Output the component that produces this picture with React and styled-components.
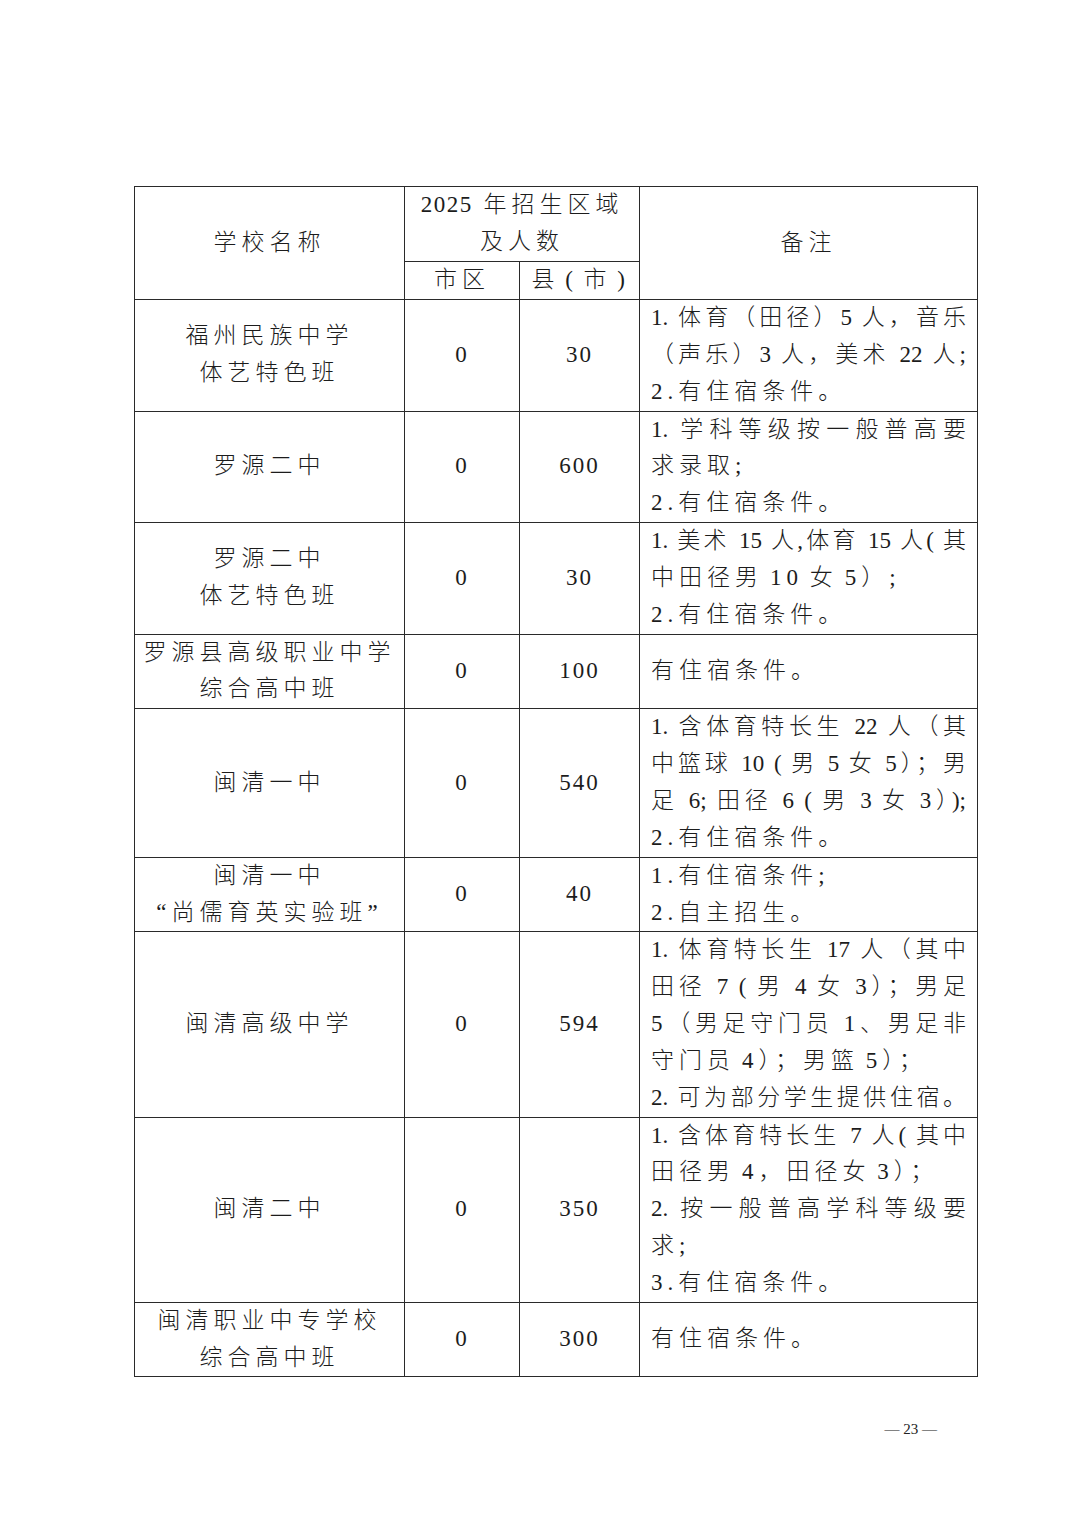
import React from "react";
import styled, { createGlobalStyle } from "styled-components";

const Global = createGlobalStyle`
  html, body { margin: 0; padding: 0; background: #fff; }
  body { font-family: "Liberation Serif", "Noto Sans CJK SC", serif; color: #1c1c1c; }
`;

const Page = styled.div`
  width: 1080px;
  height: 1528px;
  box-sizing: border-box;
  padding: 186px 0 0 134px;
  display: flex;
  flex-direction: column;
`;

const Table = styled.table`
  border-collapse: collapse;
  table-layout: fixed;
  width: 843px;
  font-size: 23px;
  line-height: 36.85px;
  font-weight: 300;
  letter-spacing: 5px;
`;

const Cell = styled.td`
  border: 1px solid #2a2a2a;
  padding: 0 ${(p) => (p.$pad ? "11px" : "0")};
  vertical-align: middle;
  text-align: ${(p) => (p.$left ? "left" : "center")};
  letter-spacing: ${(p) => (p.$num ? "2px" : p.$tight ? "2.5px" : "5px")};
  height: ${(p) => (p.$h ? p.$h + "px" : "auto")};
`;

const Num = styled.span`
  letter-spacing: 1.5px;
`;

const Line = styled.div`
  white-space: nowrap;
  text-align: ${(p) => (p.$full ? "justify" : "left")};
  text-align-last: ${(p) => (p.$full ? "justify" : "left")};
  text-justify: inter-character;
  letter-spacing: ${(p) => (p.$full ? "0px" : "5px")};
`;

const Footer = styled.div`
  width: 803px;
  margin-top: 44px;
  text-align: right;
  font-family: "Liberation Serif", serif;
  font-size: 15px;
  color: #222;
`;

const rows = [
  {
    name: ["福州民族中学", "体艺特色班"],
    a: "0",
    b: "30",
    notes: [
      ["1. 体育（田径）5 人，音乐", true],
      ["（声乐）3 人，美术 22 人;", true],
      ["2.有住宿条件。"],
    ],
  },
  {
    name: ["罗源二中"],
    a: "0",
    b: "600",
    notes: [["1. 学科等级按一般普高要", true], ["求录取;"], ["2.有住宿条件。"]],
  },
  {
    name: ["罗源二中", "体艺特色班"],
    a: "0",
    b: "30",
    notes: [
      ["1. 美术 15 人,体育 15 人( 其", true],
      ["中田径男\u200a10\u200a女\u200a5）;"],
      ["2.有住宿条件。"],
    ],
  },
  {
    name: ["罗源县高级职业中学", "综合高中班"],
    a: "0",
    b: "100",
    notes: [["有住宿条件。"]],
  },
  {
    name: ["闽清一中"],
    a: "0",
    b: "540",
    notes: [
      ["1. 含体育特长生 22 人（其", true],
      ["中篮球 10 ( 男 5 女 5）；男", true],
      ["足 6; 田径 6 ( 男 3 女 3）);", true],
      ["2.有住宿条件。"],
    ],
  },
  {
    name: ["闽清一中", "“尚儒育英实验班”"],
    a: "0",
    b: "40",
    notes: [["1.有住宿条件;"], ["2.自主招生。"]],
  },
  {
    name: ["闽清高级中学"],
    a: "0",
    b: "594",
    notes: [
      ["1. 体育特长生 17 人（其中", true],
      ["田径 7 ( 男 4 女 3）；男足", true],
      ["5（男足守门员 1、男足非", true],
      ["守门员\u200a4）；男篮\u200a5）；"],
      ["2. 可为部分学生提供住宿。", true],
    ],
  },
  {
    name: ["闽清二中"],
    a: "0",
    b: "350",
    notes: [
      ["1. 含体育特长生 7 人( 其中", true],
      ["田径男\u200a4，田径女\u200a3）；"],
      ["2. 按一般普高学科等级要", true],
      ["求;"],
      ["3.有住宿条件。"],
    ],
  },
  {
    name: ["闽清职业中专学校", "综合高中班"],
    a: "0",
    b: "300",
    notes: [["有住宿条件。"]],
  },
];

export default function App() {
  return (
    <>
      <Global />
      <Page>
        <Table>
          <colgroup>
            <col style={{ width: 270 }} />
            <col style={{ width: 115 }} />
            <col style={{ width: 120 }} />
            <col style={{ width: 338 }} />
          </colgroup>
          <tbody>
            <tr>
              <Cell rowSpan={2}>学校名称</Cell>
              <Cell colSpan={2} $h={74}>
                <div>
                  <Num>2025</Num> 年招生区域
                </div>
                <div>及人数</div>
              </Cell>
              <Cell rowSpan={2}>备注</Cell>
            </tr>
            <tr>
              <Cell $h={37}>市区</Cell>
              <Cell $h={37} $tight>
                县 ( 市 )
              </Cell>
            </tr>
            {rows.map((r, i) => (
              <tr key={i}>
                <Cell>
                  {r.name.map((n, j) => (
                    <div key={j}>{n}</div>
                  ))}
                </Cell>
                <Cell $num>{r.a}</Cell>
                <Cell $num>{r.b}</Cell>
                <Cell $left $pad>
                  {r.notes.map(([t, full], j) => (
                    <Line key={j} $full={!!full}>
                      {t}
                    </Line>
                  ))}
                </Cell>
              </tr>
            ))}
          </tbody>
        </Table>
        <Footer>— 23 —</Footer>
      </Page>
    </>
  );
}
